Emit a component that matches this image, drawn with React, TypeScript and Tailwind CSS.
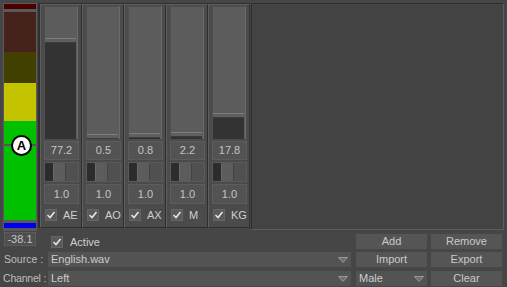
import React from 'react'

const channels = [
  { name: 'AE', value: '77.2', thumb: 31 },
  { name: 'AO', value: '0.5', thumb: 127 },
  { name: 'AX', value: '0.8', thumb: 126 },
  { name: 'M', value: '2.2', thumb: 125 },
  { name: 'KG', value: '17.8', thumb: 106 },
]

const Check = () => (
  <div className="w-[12px] h-[12px] bg-[#5a5a5a] border border-[#666] flex items-center justify-center">
    <svg width="10" height="10" viewBox="0 0 10 10">
      <path d="M1.5 5 L4 7.5 L8.5 2" fill="none" stroke="#e6e6e6" strokeWidth="1.6" />
    </svg>
  </div>
)

const Arrow = () => (
  <svg width="10" height="6" viewBox="0 0 10 6">
    <polygon points="0.5,0.5 9.5,0.5 5,5.5" fill="#6e6e6e" stroke="#9a9a9a" strokeWidth="1" />
  </svg>
)

function Channel({ name, value, thumb }: { name: string; value: string; thumb: number }) {
  return (
    <div className="w-[42px] h-[224px] bg-[#4b4b4b] border-l border-t border-[#5e5e5e] border-r border-r-[#2e2e2e] border-b border-b-[#2e2e2e] flex flex-col pl-[3px]">
      {/* fader track */}
      <div className="relative mt-[1px] w-[34px] h-[133px] bg-[#5c5c5c] border-l border-t border-[#4f4f4f] border-r border-r-[#6b6b6b]">
        <div className="absolute left-0 right-[1px] bottom-0 bg-[#333333]" style={{ top: thumb + 4 }} />
        <div className="absolute left-0 right-[1px] h-[5px] bg-[#5f5f5f] border-t border-[#7d7d7d] border-b border-b-[#3c3c3c]" style={{ top: thumb }} />
      </div>
      <div className="mt-[2px] w-[35px] h-[19px] bg-[#535353] border border-[#5c5c5c] flex items-center justify-center text-[11px] text-[#c4c4c4]">{value}</div>
      {/* pan */}
      <div className="mt-[2px] w-[35px] h-[20px] bg-[#505050] border border-[#5a5a5a] flex">
        <div className="w-[8px] bg-[#2c2c2c]" />
        <div className="w-[13px] bg-[#5c5c5c] border-l border-[#6a6a6a] border-r border-r-[#444]" />
      </div>
      <div className="mt-[2px] w-[35px] h-[20px] bg-[#535353] border border-[#5c5c5c] flex items-center justify-center text-[11px] text-[#c4c4c4]">1.0</div>
      <div className="mt-[5px] flex items-center pl-[1px]">
        <Check />
        <span className="ml-[6px] text-[11px] text-[#cfcfcf]">{name}</span>
      </div>
    </div>
  )
}

function Button({ label }: { label: string }) {
  return (
    <div className="w-[71px] h-[15px] bg-[#555555] flex items-center justify-center text-[11px] text-[#cacaca]">{label}</div>
  )
}

function Select({ text, w }: { text: string; w: string }) {
  return (
    <div className={`${w} h-[15px] bg-[#535353] flex items-center justify-between pl-[3px] pr-[3px] text-[11px] text-[#cccccc]`}>
      <span>{text}</span>
      <Arrow />
    </div>
  )
}

export default function App() {
  return (
    <div className="w-[507px] h-[287px] bg-[#464646] overflow-hidden font-['Liberation_Sans',Arial,sans-serif] leading-none select-none">
      <div className="flex pt-[3px] h-[232px]">
        {/* level meter */}
        <div className="ml-[3px] w-[34px] h-[228px] bg-[#595959] p-px flex flex-col relative">
          <div className="h-[5px] bg-[#4a0000]" />
          <div className="h-[3px]" />
          <div className="h-[40px] bg-[#46231a]" />
          <div className="h-[31px] bg-[#414000]" />
          <div className="h-[38px] bg-[#c4c300]" />
          <div className="h-[99px] bg-[#00c000]" />
          <div className="h-[3px]" />
          <div className="h-[5px] bg-[#0000f0]" />
          <div className="absolute left-px right-px top-[141px] h-[2px] bg-[#555]" />
          <div className="absolute left-[8px] top-[132px] w-[21px] h-[21px] rounded-full bg-white border-[2px] border-black flex items-center justify-center text-[13px] font-bold text-black">A</div>
        </div>
        {/* faders */}
        <div className="ml-[1px] flex border-l-2 border-t border-[#2f2f2f] h-[225px]">
          {channels.map(c => <Channel key={c.name} {...c} />)}
        </div>
        {/* empty panel */}
        <div className="ml-[1px] w-[253px] h-[227px] bg-[#434343] border-l border-t border-[#2e2e2e] border-r border-r-[#5c5c5c] border-b border-b-[#5c5c5c]" />
      </div>

      <div className="flex">
        <div className="w-[352px] flex flex-col">
          <div className="h-[20px] flex items-start">
            <div className="ml-[4px] w-[32px] h-[14px] bg-[#4f4f4f] border border-[#5c5c5c] flex items-center justify-center text-[11px] text-[#c4c4c4]">-38.1</div>
            <div className="ml-[15px] mt-[4px]"><Check /></div>
            <span className="ml-[7px] mt-[5px] text-[11px] text-[#cfcfcf]">Active</span>
          </div>
          <div className="h-[15px] flex items-center">
            <span className="w-[48px] shrink-0 whitespace-nowrap pl-[4px] text-[10.5px] text-[#bdbdbd]">Source :</span>
            <Select text="English.wav" w="w-[303px]" />
          </div>
          <div className="mt-[4px] h-[15px] flex items-center">
            <span className="w-[48px] shrink-0 whitespace-nowrap pl-[3px] text-[10.5px] tracking-[-0.2px] text-[#bdbdbd]">Channel :</span>
            <Select text="Left" w="w-[303px]" />
          </div>
        </div>
        <div className="ml-[4px] flex flex-col">
          <div className="mt-[2px] flex gap-[4px]"><Button label="Add" /><Button label="Remove" /></div>
          <div className="mt-[3px] flex gap-[4px]"><Button label="Import" /><Button label="Export" /></div>
          <div className="mt-[4px] flex gap-[4px]"><Select text="Male" w="w-[71px]" /><Button label="Clear" /></div>
        </div>
      </div>
    </div>
  )
}
